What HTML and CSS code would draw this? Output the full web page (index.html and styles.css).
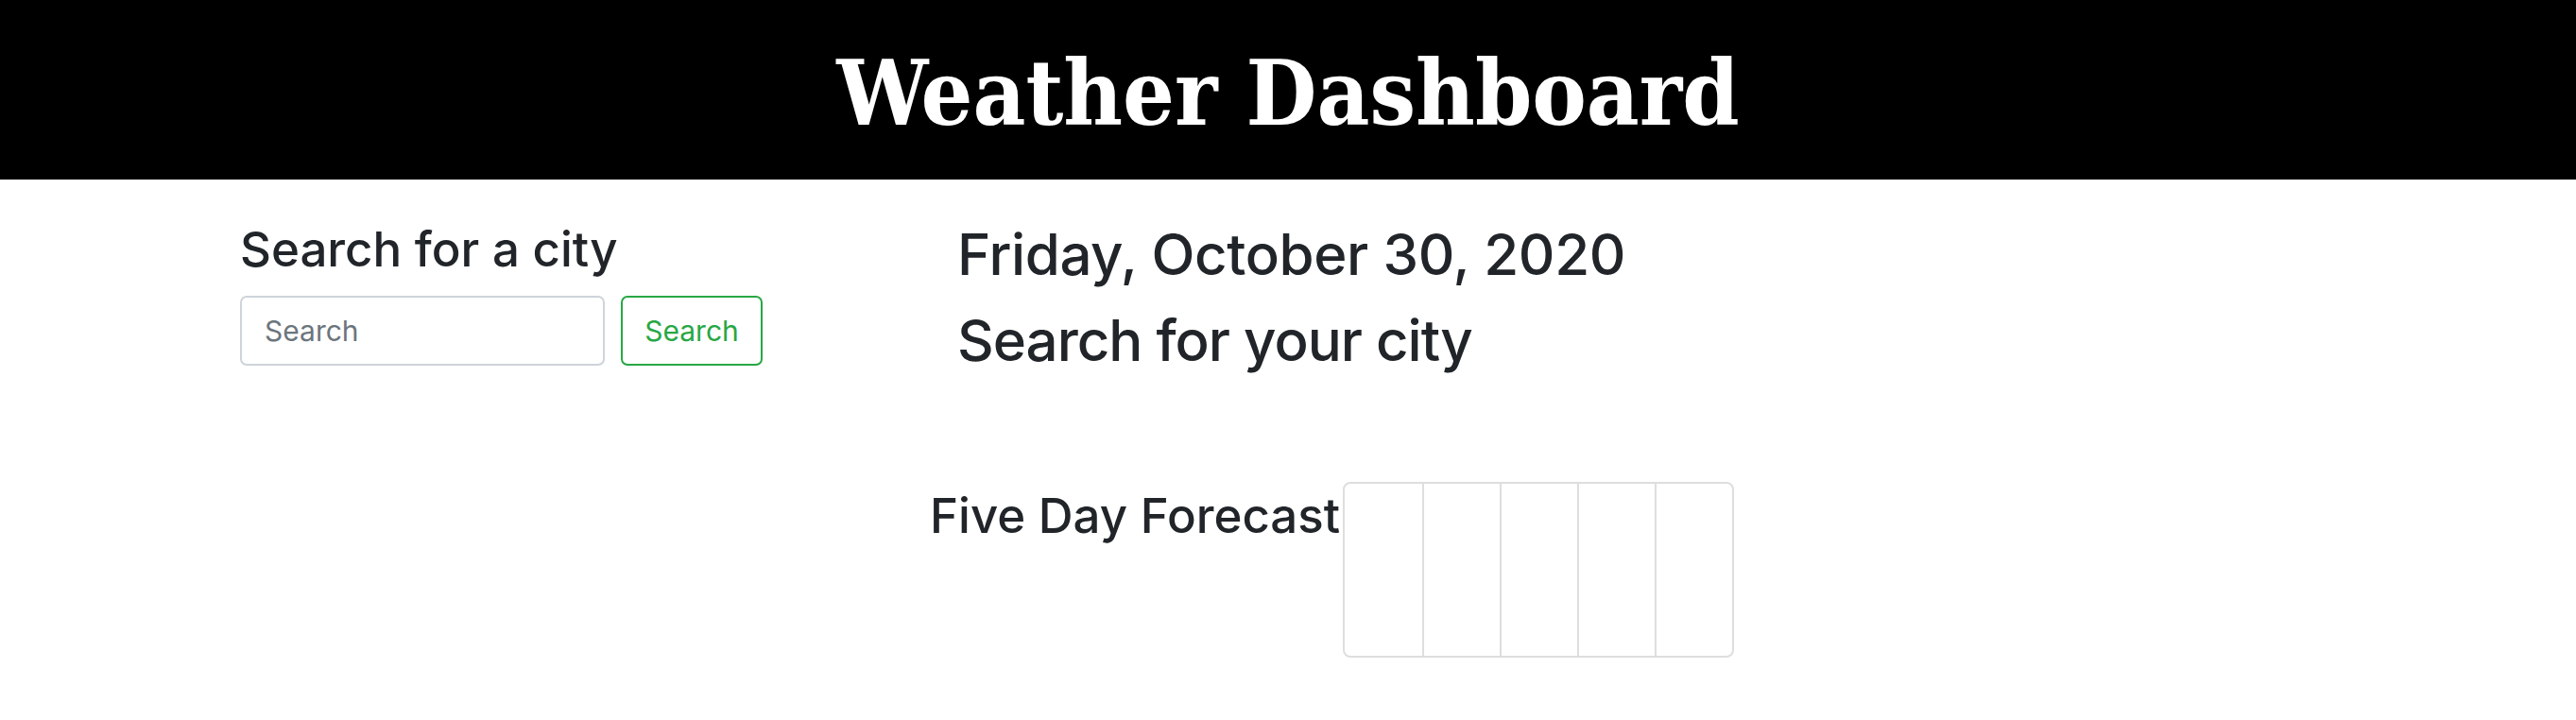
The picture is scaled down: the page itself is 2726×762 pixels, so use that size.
FILE: index.html
```html
<!DOCTYPE html>
<html lang="en">
<head>
<meta charset="utf-8">
<title>Weather Dashboard</title>
<link rel="stylesheet" href="styles.css">
</head>
<body>
<header class="banner">
  <h1 class="banner-title">Weather Dashboard</h1>
</header>
<main class="content">
  <aside class="sidebar">
    <h3 class="side-heading">Search for a city</h3>
    <form class="search-form">
      <input class="search-input" type="text" placeholder="Search">
      <button class="search-btn" type="button">Search</button>
    </form>
  </aside>
  <section class="current">
    <h2 class="big-heading">Friday, October 30, 2020</h2>
    <h2 class="big-heading city">Search for your city</h2>
  </section>
</main>
<section class="forecast">
  <h3 class="forecast-title">Five Day Forecast</h3>
  <div class="card-group">
    <div class="card"></div>
    <div class="card"></div>
    <div class="card"></div>
    <div class="card"></div>
    <div class="card"></div>
  </div>
</section>
</body>
</html>
```

FILE: styles.css
```css
* { box-sizing: border-box; }
html, body { margin: 0; padding: 0; background: #fff; }
body {
  font-family: Inter, "Noto Sans", "Liberation Sans", sans-serif;
  color: #212529;
}
.banner {
  background: #000;
  height: 190px;
  padding-top: 51px;
  text-align: center;
}
.banner-title {
  margin: 0;
  font-family: "DejaVu Serif Condensed", "DejaVu Serif", serif;
  font-stretch: condensed;
  font-weight: 700;
  font-size: 96px;
  line-height: 1;
  color: #fff;
}
.content {
  display: flex;
  padding-left: 254px;
  padding-top: 43px;
}
.sidebar {
  width: 759px;
  flex: none;
}
.side-heading {
  margin: 0 0 19px 0;
  font-size: 51px;
  font-weight: 500;
  line-height: 1.2;
}
.search-form {
  display: flex;
  gap: 17px;
}
.search-input {
  width: 386px;
  height: 74px;
  border: 2px solid #ced4da;
  border-radius: 7px;
  padding: 0 24px;
  font-family: inherit;
  font-size: 30px;
  color: #495057;
}
.search-input::placeholder { color: #6c757d; }
.search-btn {
  width: 150px;
  height: 74px;
  border: 2px solid #28a745;
  border-radius: 7px;
  background: #fff;
  color: #28a745;
  font-family: inherit;
  font-size: 30px;
  padding: 0;
}
.current { flex: 1; }
.big-heading {
  margin: 0;
  font-size: 60px;
  font-weight: 500;
  line-height: 1.2;
  letter-spacing: -0.4px;
}
.city {
  margin-top: 19px;
  letter-spacing: -1px;
}
.forecast {
  display: flex;
  align-items: flex-start;
  padding-left: 984px;
  margin-top: 114px;
}
.forecast-title {
  margin: 5px 0 0 0;
  font-size: 51px;
  font-weight: 500;
  line-height: 1.2;
}
.card-group {
  display: flex;
  margin-left: 3px;
  height: 186px;
  border: 2px solid #dedede;
  border-radius: 8px;
}
.card {
  width: 82px;
  height: 100%;
}
.card + .card { border-left: 2px solid #dedede; }
```
